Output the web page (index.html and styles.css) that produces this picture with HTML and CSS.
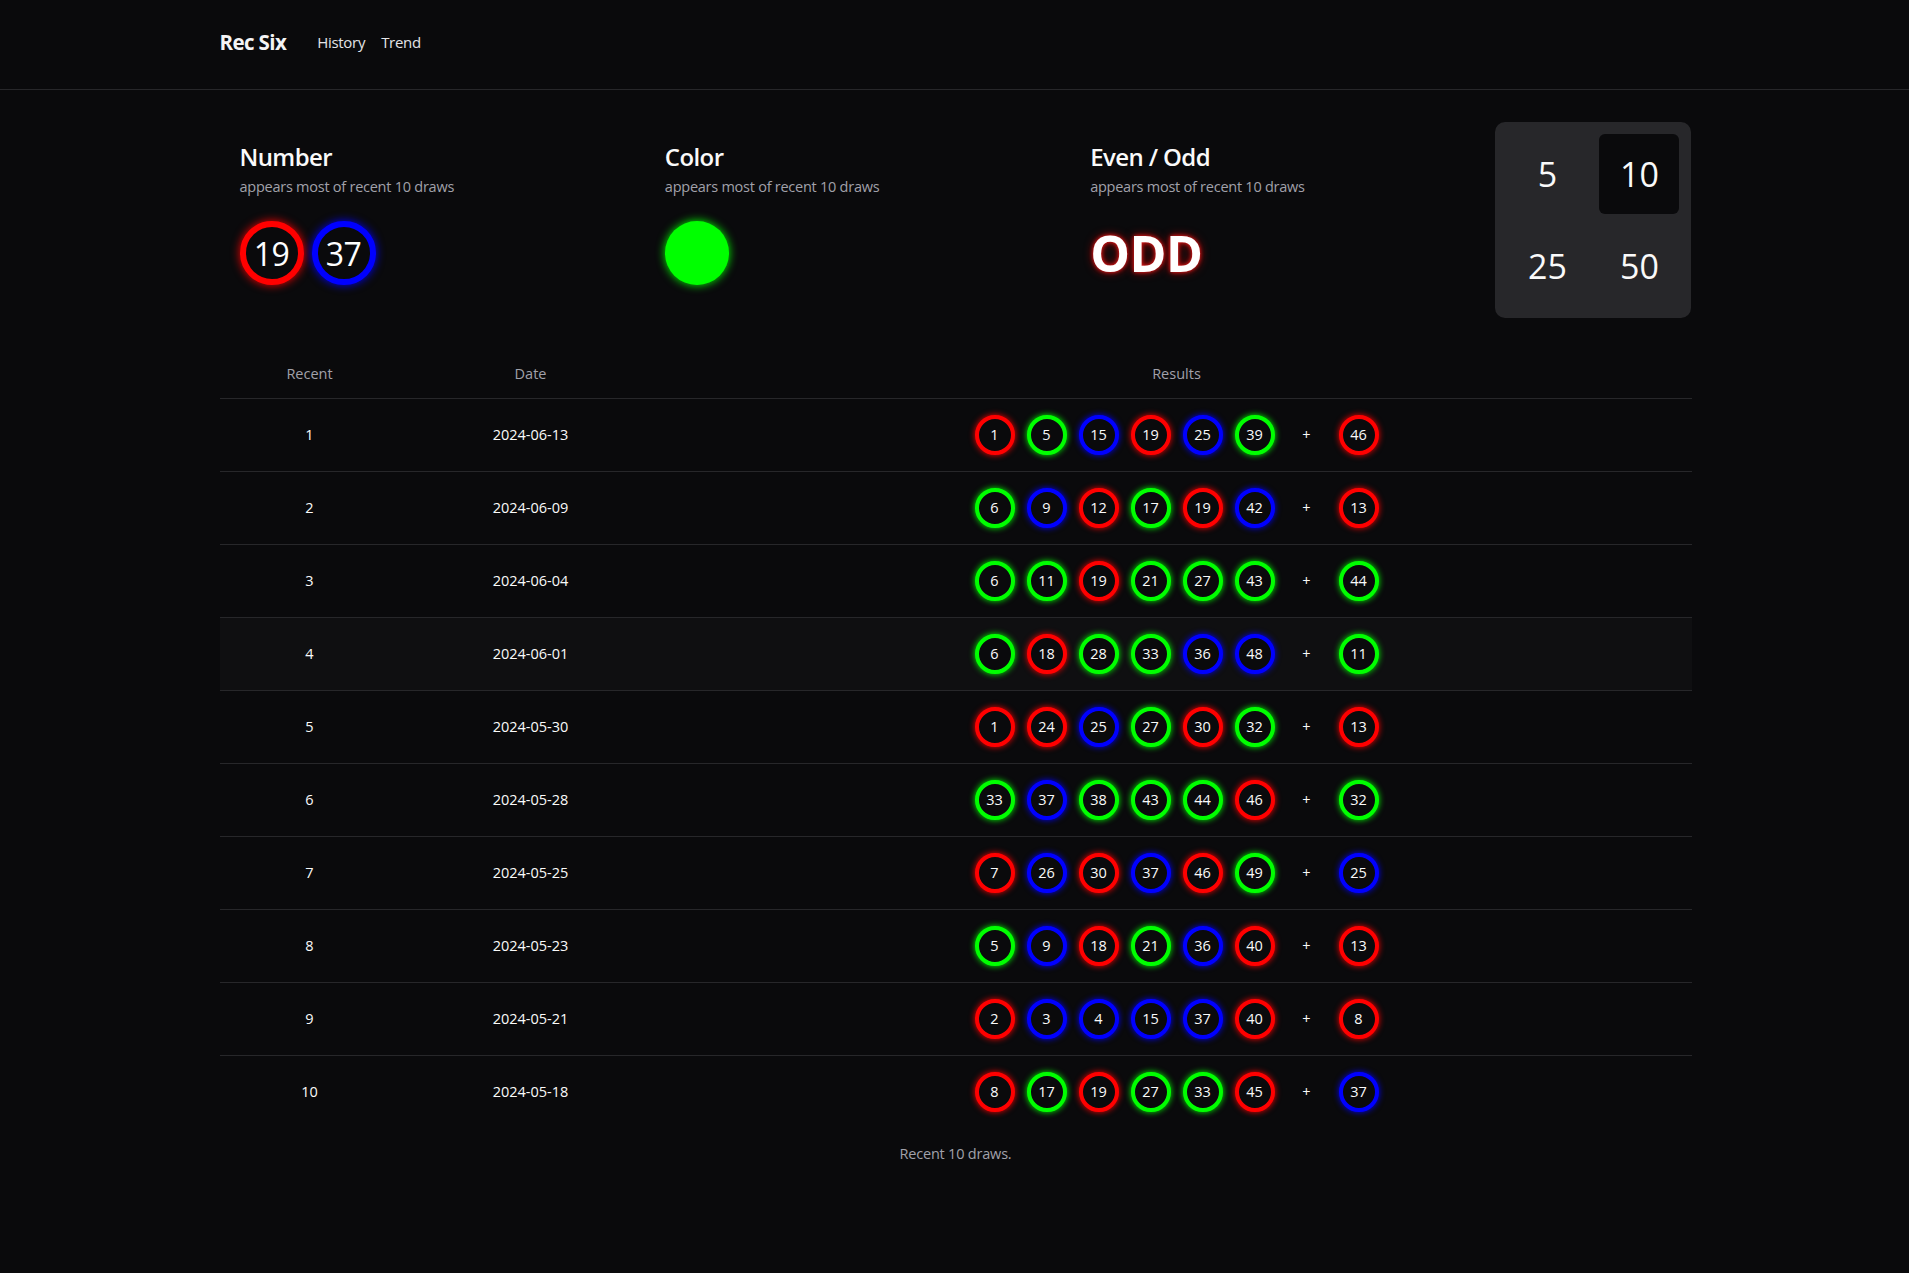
FILE: index.html
```html
<!DOCTYPE html>
<html lang="en">
<head>
<meta charset="utf-8">
<title>Rec Six</title>
<link rel="stylesheet" href="styles.css">
</head>
<body>
<header class="topbar">
  <div class="container topbar-inner">
    <a class="brand">Rec Six</a>
    <nav class="nav">
      <a>History</a>
      <a>Trend</a>
    </nav>
  </div>
</header>
<main class="container">
  <section class="summary">
    <div class="card">
      <h2 class="card-title">Number</h2>
      <p class="card-sub">appears most of recent 10 draws</p>
      <div class="card-body">
        <span class="big-ball red">19</span>
        <span class="big-ball blue">37</span>
      </div>
    </div>
    <div class="card">
      <h2 class="card-title">Color</h2>
      <p class="card-sub">appears most of recent 10 draws</p>
      <div class="card-body">
        <span class="dot green"></span>
      </div>
    </div>
    <div class="card">
      <h2 class="card-title">Even / Odd</h2>
      <p class="card-sub">appears most of recent 10 draws</p>
      <div class="card-body">
        <span class="parity">ODD</span>
      </div>
    </div>
    <div class="picker">
      <button class="pick">5</button>
      <button class="pick active">10</button>
      <button class="pick">25</button>
      <button class="pick">50</button>
    </div>
  </section>

  <table class="draws">
    <caption>Recent 10 draws.</caption>
    <thead>
      <tr><th class="c-recent">Recent</th><th class="c-date">Date</th><th class="c-res">Results</th></tr>
    </thead>
    <tbody>
      <tr><td>1</td><td>2024-06-13</td><td><div class="balls"><span class="ball r">1</span><span class="ball g">5</span><span class="ball b">15</span><span class="ball r">19</span><span class="ball b">25</span><span class="ball g">39</span><span class="plus">+</span><span class="ball r">46</span></div></td></tr>
      <tr><td>2</td><td>2024-06-09</td><td><div class="balls"><span class="ball g">6</span><span class="ball b">9</span><span class="ball r">12</span><span class="ball g">17</span><span class="ball r">19</span><span class="ball b">42</span><span class="plus">+</span><span class="ball r">13</span></div></td></tr>
      <tr><td>3</td><td>2024-06-04</td><td><div class="balls"><span class="ball g">6</span><span class="ball g">11</span><span class="ball r">19</span><span class="ball g">21</span><span class="ball g">27</span><span class="ball g">43</span><span class="plus">+</span><span class="ball g">44</span></div></td></tr>
      <tr class="hover"><td>4</td><td>2024-06-01</td><td><div class="balls"><span class="ball g">6</span><span class="ball r">18</span><span class="ball g">28</span><span class="ball g">33</span><span class="ball b">36</span><span class="ball b">48</span><span class="plus">+</span><span class="ball g">11</span></div></td></tr>
      <tr><td>5</td><td>2024-05-30</td><td><div class="balls"><span class="ball r">1</span><span class="ball r">24</span><span class="ball b">25</span><span class="ball g">27</span><span class="ball r">30</span><span class="ball g">32</span><span class="plus">+</span><span class="ball r">13</span></div></td></tr>
      <tr><td>6</td><td>2024-05-28</td><td><div class="balls"><span class="ball g">33</span><span class="ball b">37</span><span class="ball g">38</span><span class="ball g">43</span><span class="ball g">44</span><span class="ball r">46</span><span class="plus">+</span><span class="ball g">32</span></div></td></tr>
      <tr><td>7</td><td>2024-05-25</td><td><div class="balls"><span class="ball r">7</span><span class="ball b">26</span><span class="ball r">30</span><span class="ball b">37</span><span class="ball r">46</span><span class="ball g">49</span><span class="plus">+</span><span class="ball b">25</span></div></td></tr>
      <tr><td>8</td><td>2024-05-23</td><td><div class="balls"><span class="ball g">5</span><span class="ball b">9</span><span class="ball r">18</span><span class="ball g">21</span><span class="ball b">36</span><span class="ball r">40</span><span class="plus">+</span><span class="ball r">13</span></div></td></tr>
      <tr><td>9</td><td>2024-05-21</td><td><div class="balls"><span class="ball r">2</span><span class="ball b">3</span><span class="ball b">4</span><span class="ball b">15</span><span class="ball b">37</span><span class="ball r">40</span><span class="plus">+</span><span class="ball r">8</span></div></td></tr>
      <tr><td>10</td><td>2024-05-18</td><td><div class="balls"><span class="ball r">8</span><span class="ball g">17</span><span class="ball r">19</span><span class="ball g">27</span><span class="ball g">33</span><span class="ball r">45</span><span class="plus">+</span><span class="ball b">37</span></div></td></tr>
    </tbody>
  </table>
</main>
</body>
</html>
```

FILE: styles.css
```css
* { box-sizing: border-box; }
html, body {
  margin: 0;
  padding: 0;
  background: #0a0a0c;
  color: #fafafa;
  font-family: "Open Sans", "Noto Sans", sans-serif;
}
.container {
  width: 1474px;
  margin: 0 auto;
  padding-left: 2px;
}
.topbar {
  height: 90px;
  border-bottom: 1px solid #27272a;
}
.topbar-inner {
  height: 89px;
  padding-bottom: 5px;
  display: flex;
  align-items: center;
  gap: 31px;
}
.brand {
  font-size: 20.5px;
  font-weight: 700;
  letter-spacing: -0.6px;
  color: #f4f4f5;
}
.nav {
  display: flex;
  gap: 16px;
  font-size: 15px;
  letter-spacing: -0.3px;
}
.nav a { color: #e4e4e7; }

.summary {
  display: flex;
  margin-top: 32px;
}
.card {
  flex: 1;
  padding: 20px 20px 0;
}
.card-title {
  margin: 0;
  font-size: 24px;
  line-height: 30px;
  font-weight: 600;
  letter-spacing: -0.6px;
}
.card-sub {
  margin: 5px 0 0;
  font-size: 14.5px;
  line-height: 20px;
  color: #a1a1aa;
  letter-spacing: -0.25px;
}
.card-body {
  margin-top: 22px;
  height: 68px;
  display: flex;
  align-items: center;
  gap: 8px;
}
.big-ball {
  width: 64px;
  height: 64px;
  border-radius: 50%;
  border: 6px solid;
  display: flex;
  align-items: center;
  justify-content: center;
  font-size: 32px;
  font-weight: 500;
  letter-spacing: -0.5px;
  color: #fff;
  background: #0a0a0c;
}
.big-ball.red { border-color: #ff0000; box-shadow: 0 0 10px #ff0000; }
.big-ball.blue { border-color: #0000ff; box-shadow: 0 0 10px #0000ff; }
.dot {
  width: 64px;
  height: 64px;
  border-radius: 50%;
}
.dot.green { background: #00ff00; box-shadow: 0 0 10px #00ff00; }
.parity {
  font-size: 50px;
  font-weight: 700;
  color: #fff;
  letter-spacing: -0.5px;
  text-shadow: 0 0 4px #ff2020, 0 0 10px #a00000;
}
.picker {
  width: 196px;
  height: 196px;
  background: #27272a;
  border-radius: 10px;
  padding: 12px;
  display: grid;
  grid-template-columns: 80px 80px;
  grid-template-rows: 80px 80px;
  gap: 12px;
}
.pick {
  border: 0;
  border-radius: 6px;
  background: transparent;
  color: #fafafa;
  font-family: inherit;
  font-size: 34px;
  padding: 0;
}
.pick.active { background: #0a0a0c; }

.draws {
  width: 100%;
  margin-top: 32px;
  border-collapse: collapse;
  font-size: 14.5px;
}
.draws caption {
  caption-side: bottom;
  padding-top: 16px;
  color: #a1a1aa;
  font-size: 14.5px;
  letter-spacing: -0.2px;
}
.draws th {
  height: 48px;
  font-weight: 400;
  font-size: 14.5px;
  color: #a1a1aa;
  text-align: center;
  border-bottom: 1px solid #27272a;
}
.c-recent { width: 180px; }
.c-date { width: 262px; }
.draws td {
  height: 73px;
  padding: 0;
  text-align: center;
  border-bottom: 1px solid #27272a;
  color: #fafafa;
}
.draws tbody tr:last-child td { border-bottom: 0; }
.draws tr.hover td { background: #0f0f11; }
.balls {
  display: flex;
  justify-content: center;
  gap: 12px;
}
.ball, .plus {
  width: 40px;
  height: 40px;
  display: flex;
  align-items: center;
  justify-content: center;
  font-size: 14.5px;
}
.ball {
  border-radius: 50%;
  border: 4px solid;
  background: #0a0a0c;
}
.ball.r { border-color: #ff0000; box-shadow: 0 0 6px #ff0000; }
.ball.g { border-color: #00ff00; box-shadow: 0 0 6px #00ff00; }
.ball.b { border-color: #0000ff; box-shadow: 0 0 6px #0000ff; }
```
